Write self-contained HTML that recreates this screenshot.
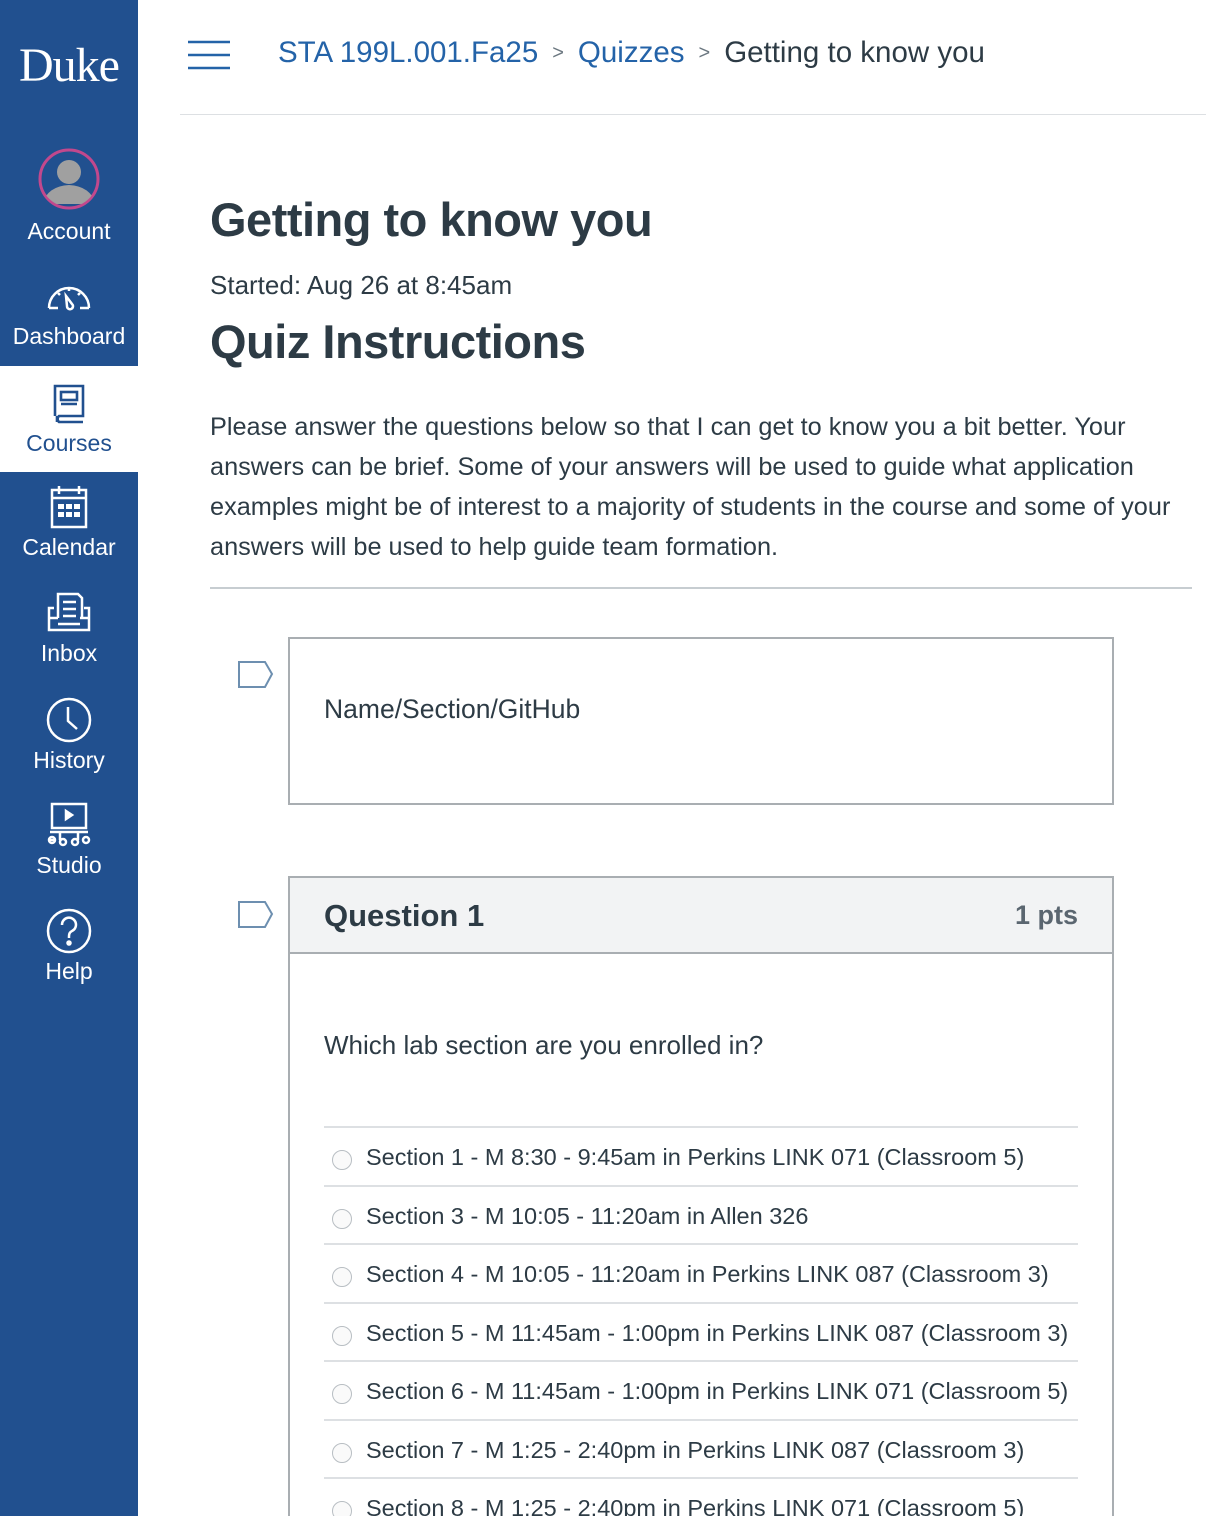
<!DOCTYPE html>
<html><head><meta charset="utf-8"><style>
*{box-sizing:border-box;margin:0;padding:0}
html{overflow:hidden;width:1206px;height:1516px}
body{width:1206px;height:1516px;overflow:hidden;background:#fff;font-family:"Liberation Sans",sans-serif;color:#2d3b45;position:relative}
.side{position:absolute;left:0;top:0;width:138px;height:1516px;background:#21508f}
.logo{position:absolute;left:0;width:138px;top:38px;text-align:center;color:#fff;font-family:"Liberation Serif",serif;font-size:48px;letter-spacing:-1px}
.nav{position:absolute;left:0;width:138px;text-align:center;color:#fff;font-size:23px}
.nav svg{display:block;margin:0 auto}
.nav.act{background:#fff;color:#21508f}
.hdr{position:absolute;left:180px;top:0;right:0;height:115px;border-bottom:1px solid #dde0e3}
.ham{position:absolute;left:188px;top:40px}
.crumb{position:absolute;left:278px;top:36px;font-size:29.5px;white-space:nowrap}
.crumb a{color:#2463a8;text-decoration:none}
.crumb .sep{color:#6b7780;font-size:20px;margin:0 14px;position:relative;top:-3px}
h1{position:absolute;left:210px;top:192px;font-size:47px;font-weight:bold;letter-spacing:-0.5px}
.started{position:absolute;left:210px;top:270px;font-size:26px}
h2{position:absolute;left:210px;top:314px;font-size:47px;font-weight:bold;letter-spacing:-0.5px}
.para{position:absolute;left:210px;top:407px;width:990px;font-size:25.3px;line-height:40px}
.hr{position:absolute;left:210px;top:587px;width:982px;height:2px;background:#c7cdd1}
.flag{position:absolute;left:238px}
.box{position:absolute;left:288px;width:826px;border:2px solid #a9aeb2}
.q1h{position:absolute;left:290px;top:878px;width:822px;height:76px;background:#f2f3f4;border-bottom:2px solid #a9aeb2}
.opt{position:absolute;left:324px;width:754px;height:58px;border-top:2px solid #dde0e3;font-size:23.5px}
.opt span.r{position:absolute;left:8px;top:22px;width:20px;height:20px;border:1px solid #b8bec3;border-radius:50%;background:#fafafa}
.opt span.t{position:absolute;left:42px;top:16px;white-space:nowrap}
</style></head><body>
<div class="side">
<div class="logo">Duke</div>
<div class="nav" style="top:148px"><svg width="62" height="62" viewBox="0 0 62 62"><defs><clipPath id="c"><circle cx="31" cy="31" r="28"/></clipPath></defs><circle cx="31" cy="31" r="29" fill="#21508f" stroke="#c2488d" stroke-width="3"/><g clip-path="url(#c)"><circle cx="31" cy="24" r="12" fill="#a0a0a0"/><path d="M4 56 Q10 38 31 37 Q52 38 58 56 Z" fill="#a0a0a0"/></g></svg><div style="margin-top:8px">Account</div></div>
<div class="nav" style="top:276px"><svg width="48" height="36" viewBox="0 0 48 36" fill="none" stroke="#fff" stroke-width="2.5"><path d="M4 32 A20 20 0 1 1 44 32"/><path d="M4 32h9M35 32h9"/><path d="M21 20l6 8a3 3 0 1 1-5 2z"/><path d="M24 12v3M13 17l2 2M35 17l-2 2"/></svg><div style="margin-top:11px">Dashboard</div></div>
<div class="nav act" style="top:366px;height:106px"><svg width="36" height="44" viewBox="0 0 36 44" fill="none" stroke="#21508f" stroke-width="2.6" style="margin-top:14px"><path d="M4 36V6h28v30H8a4 4 0 0 0 0 6h24"/><rect x="10" y="12" width="16" height="8"/><path d="M10 24h16M6 42V36"/></svg><div style="margin-top:6px">Courses</div></div>
<div class="nav" style="top:484px"><svg width="40" height="46" viewBox="0 0 40 46" fill="none" stroke="#fff" stroke-width="2.5"><rect x="3" y="6" width="34" height="37"/><path d="M3 14h34M10 2v8M30 2v8"/><g fill="#fff" stroke="none"><rect x="9" y="20" width="6" height="5"/><rect x="17" y="20" width="6" height="5"/><rect x="25" y="20" width="6" height="5"/><rect x="9" y="28" width="6" height="5"/><rect x="17" y="28" width="6" height="5"/><rect x="25" y="28" width="6" height="5"/></g></svg><div style="margin-top:4px">Calendar</div></div>
<div class="nav" style="top:592px"><svg width="46" height="42" viewBox="0 0 46 42" fill="none" stroke="#fff" stroke-width="2.5"><path d="M12 26V2h20l4 4v20"/><path d="M17 10h13M17 17h13M17 24h13"/><path d="M8 16H3v22h40V16h-5"/><path d="M3 26h9M34 26h9M12 32h22"/></svg><div style="margin-top:6px">Inbox</div></div>
<div class="nav" style="top:697px"><svg width="46" height="46" viewBox="0 0 46 46" fill="none" stroke="#fff" stroke-width="2.5"><circle cx="23" cy="23" r="21"/><path d="M22 10v14l9 8"/></svg><div style="margin-top:4px">History</div></div>
<div class="nav" style="top:802px"><svg width="46" height="46" viewBox="0 0 46 46" fill="none" stroke="#fff" stroke-width="2.5"><rect x="6" y="2" width="34" height="24"/><path d="M4 30h38"/><path d="M20 9l6 4-6 4z" fill="#fff"/><path d="M14 30v8M32 30v8M8 38h-4"/><circle cx="6" cy="38" r="3"/><circle cx="17" cy="40" r="3"/><circle cx="29" cy="40" r="3"/><circle cx="40" cy="38" r="3"/></svg><div style="margin-top:4px">Studio</div></div>
<div class="nav" style="top:908px"><svg width="46" height="46" viewBox="0 0 46 46" fill="none" stroke="#fff" stroke-width="2.5"><circle cx="23" cy="23" r="21"/><path d="M16 17a7 7 0 1 1 10 6c-2 1-3 3-3 5v2"/><circle cx="23" cy="35" r="1.5" fill="#fff"/></svg><div style="margin-top:4px">Help</div></div>
</div>
<div class="hdr"></div>
<svg class="ham" width="42" height="30" viewBox="0 0 42 30" stroke="#2463a8" stroke-width="2.5"><path d="M0 2h42M0 15h42M0 28h42"/></svg>
<div class="crumb"><a>STA 199L.001.Fa25</a><span class="sep">&gt;</span><a>Quizzes</a><span class="sep">&gt;</span><span>Getting to know you</span></div>
<h1>Getting to know you</h1>
<div class="started">Started: Aug 26 at 8:45am</div>
<h2>Quiz Instructions</h2>
<div class="para">Please answer the questions below so that I can get to know you a bit better. Your answers can be brief. Some of your answers will be used to guide what application examples might be of interest to a majority of students in the course and some of your answers will be used to help guide team formation.</div>
<div class="hr"></div>
<svg class="flag" style="top:660px" width="36" height="30" viewBox="0 0 36 30" fill="none" stroke="#6d8fb0" stroke-width="2"><path d="M1 2h26l7 12-7 13H1z"/></svg>
<div class="box" style="top:637px;height:168px"><div style="position:absolute;left:34px;top:55px;font-size:26.5px">Name/Section/GitHub</div></div>
<svg class="flag" style="top:900px" width="36" height="30" viewBox="0 0 36 30" fill="none" stroke="#6d8fb0" stroke-width="2"><path d="M1 2h26l7 12-7 13H1z"/></svg>
<div class="box" style="top:876px;height:640px;border-bottom:none"></div>
<div class="q1h"><div style="position:absolute;left:34px;top:20px;font-size:31px;font-weight:bold">Question 1</div><div style="position:absolute;right:34px;top:22px;font-size:27px;font-weight:bold;color:#5b6670">1 pts</div></div>
<div style="position:absolute;left:324px;top:1030px;font-size:26px">Which lab section are you enrolled in?</div>
<div class="opt" style="top:1126px"><span class="r"></span><span class="t">Section 1 - M 8:30 - 9:45am in Perkins LINK 071 (Classroom 5)</span></div>
<div class="opt" style="top:1185px"><span class="r"></span><span class="t">Section 3 - M 10:05 - 11:20am in Allen 326</span></div>
<div class="opt" style="top:1243px"><span class="r"></span><span class="t">Section 4 - M 10:05 - 11:20am in Perkins LINK 087 (Classroom 3)</span></div>
<div class="opt" style="top:1302px"><span class="r"></span><span class="t">Section 5 - M 11:45am - 1:00pm in Perkins LINK 087 (Classroom 3)</span></div>
<div class="opt" style="top:1360px"><span class="r"></span><span class="t">Section 6 - M 11:45am - 1:00pm in Perkins LINK 071 (Classroom 5)</span></div>
<div class="opt" style="top:1419px"><span class="r"></span><span class="t">Section 7 - M 1:25 - 2:40pm in Perkins LINK 087 (Classroom 3)</span></div>
<div class="opt" style="top:1477px"><span class="r"></span><span class="t">Section 8 - M 1:25 - 2:40pm in Perkins LINK 071 (Classroom 5)</span></div>
</body></html>
